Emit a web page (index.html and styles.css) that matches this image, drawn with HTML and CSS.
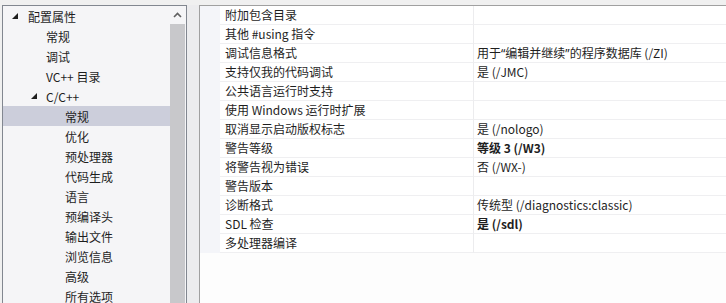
FILE: index.html
```html
<html lang="zh-CN">
<head>
    <meta charset="UTF-8">
    <title>属性页</title>
    <link rel="stylesheet" href="styles.css">
</head>
<body>
    <div class="window">
        <div class="tree-panel">
            <ul class="tree">
                <li class="node level-0"><span class="twisty"><svg width="6" height="6" viewBox="0 0 6 6"><polygon points="6,0 6,6 0,6" fill="#1e1e1e"/></svg></span>配置属性</li>
                <li class="node level-1">常规</li>
                <li class="node level-1">调试</li>
                <li class="node level-1">VC++ 目录</li>
                <li class="node level-1 parent"><span class="twisty"><svg width="6" height="6" viewBox="0 0 6 6"><polygon points="6,0 6,6 0,6" fill="#1e1e1e"/></svg></span>C/C++</li>
                <li class="node level-2 selected">常规</li>
                <li class="node level-2">优化</li>
                <li class="node level-2">预处理器</li>
                <li class="node level-2">代码生成</li>
                <li class="node level-2">语言</li>
                <li class="node level-2">预编译头</li>
                <li class="node level-2">输出文件</li>
                <li class="node level-2">浏览信息</li>
                <li class="node level-2">高级</li>
                <li class="node level-2">所有选项</li>
            </ul>
            <div class="scrollbar">
                <div class="scroll-up">
                    <svg width="9" height="6" viewBox="0 0 9 6"><polyline points="1,5 4.5,1.5 8,5" fill="none" stroke="#606060" stroke-width="1.6"/></svg>
                </div>
                <div class="scroll-thumb"></div>
            </div>
        </div>
        <div class="splitter"></div>
        <div class="grid-panel">
            <div class="row"><div class="gutter"></div><div class="name">附加包含目录</div><div class="value"></div></div>
            <div class="row"><div class="gutter"></div><div class="name">其他 #using 指令</div><div class="value"></div></div>
            <div class="row"><div class="gutter"></div><div class="name">调试信息格式</div><div class="value">用于<span class="quote">“</span>编辑并继续<span class="quote">”</span>的程序数据库 (/ZI)</div></div>
            <div class="row"><div class="gutter"></div><div class="name">支持仅我的代码调试</div><div class="value">是 (/JMC)</div></div>
            <div class="row"><div class="gutter"></div><div class="name">公共语言运行时支持</div><div class="value"></div></div>
            <div class="row"><div class="gutter"></div><div class="name">使用 Windows 运行时扩展</div><div class="value"></div></div>
            <div class="row"><div class="gutter"></div><div class="name">取消显示启动版权标志</div><div class="value">是 (/nologo)</div></div>
            <div class="row"><div class="gutter"></div><div class="name">警告等级</div><div class="value bold">等级 3 (/W3)</div></div>
            <div class="row"><div class="gutter"></div><div class="name">将警告视为错误</div><div class="value">否 (/WX-)</div></div>
            <div class="row"><div class="gutter"></div><div class="name">警告版本</div><div class="value"></div></div>
            <div class="row"><div class="gutter"></div><div class="name">诊断格式</div><div class="value">传统型 (/diagnostics:classic)</div></div>
            <div class="row"><div class="gutter"></div><div class="name">SDL 检查</div><div class="value bold">是 (/sdl)</div></div>
            <div class="row"><div class="gutter"></div><div class="name">多处理器编译</div><div class="value"></div></div>
        </div>
    </div>
</body>
</html>
```

FILE: styles.css
```css
body {
    margin: 0;
    background: #f0f0f0;
    font-family: "Noto Sans CJK SC", "Noto Sans", sans-serif;
    font-size: 12px;
    color: #1e1e1e;
    overflow: hidden;
}

.window {
    display: flex;
    height: 298px;
    padding: 5px 0 0 2px;
}

/* Tree */
.tree-panel {
    display: flex;
    width: 183px;
    border: 1px solid #828790;
    border-bottom: none;
    background: #f5f5f7;
}

.tree {
    flex: 1;
    list-style: none;
    margin: 0;
    padding: 0;
}

.node {
    display: flex;
    align-items: center;
    height: 20px;
    white-space: nowrap;
}

.level-0 { padding-left: 9px; }
.level-1 { padding-left: 43px; }
.level-1.parent { padding-left: 28px; }
.level-2 { padding-left: 62px; }

.twisty {
    display: flex;
    width: 15px;
    align-items: center;
}

.level-0 .twisty { width: 16px; }

.selected {
    background: #cccedb;
}

.scrollbar {
    display: flex;
    flex-direction: column;
    width: 15px;
    margin-right: 1px;
}

.scroll-up {
    display: flex;
    justify-content: center;
    align-items: center;
    height: 17px;
}

.scroll-thumb {
    flex: 1;
    margin-top: 1px;
    background: #c8c8cb;
}

.splitter {
    width: 12px;
    background: #ececee;
}

/* Property grid */
.grid-panel {
    flex: 1;
    border-left: 1px solid #a0a0a0;
    border-top: 1px solid #a0a0a0;
    background: #fdfdfd;
}

.row {
    display: flex;
    height: 19px;
    line-height: 18px;
    background: #fff;
}

.gutter {
    width: 20px;
    background: #f4f5f9;
}

.name {
    width: 248px;
    padding-left: 5px;
    border-bottom: 1px solid #efeff1;
    border-right: 1px solid #ececee;
    white-space: nowrap;
}

.value {
    flex: 1;
    padding-left: 3px;
    border-bottom: 1px solid #efeff1;
    white-space: nowrap;
}

.quote {
    font-family: "Noto Sans", sans-serif;
}

.bold {
    font-weight: bold;
}
```
